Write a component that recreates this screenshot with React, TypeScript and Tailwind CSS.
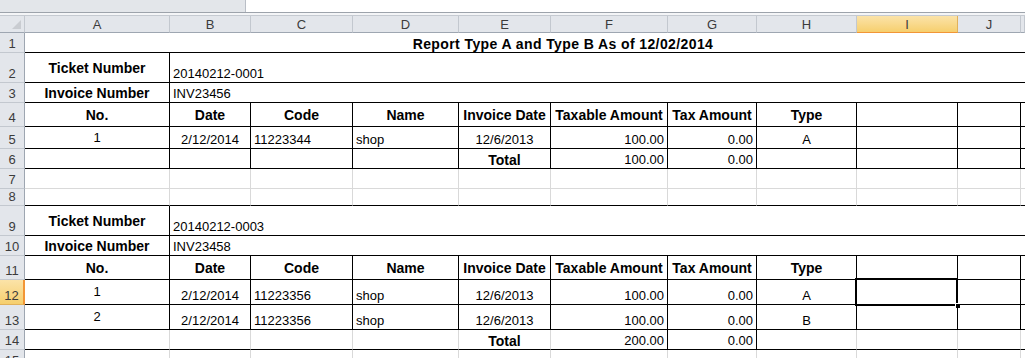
import React from "react";

type Cell = {
  t?: string;
  b?: boolean;
  al?: "l" | "c" | "r";
  v?: "c" | "b";
  r?: "k" | "g" | "n";
  span?: number;
  sel?: boolean;
  title?: boolean;
};

type Row = { h: number; bottom: "k" | "g"; cells: Cell[] };

const hdr = (): Cell[] =>
  ["No.", "Date", "Code", "Name", "Invoice Date", "Taxable Amount", "Tax Amount", "Type", "", "", ""].map((t, i) => ({
    t,
    b: true,
    al: "c" as const,
    v: "c" as const,
    r: i === 10 ? ("n" as const) : ("k" as const),
  }));

const dataRow = (n: string, code: string, type: string, sel = false): Cell[] => [
  { t: n, al: "c", v: "c", r: "k" },
  { t: "2/12/2014", al: "c", r: "k" },
  { t: code, al: "l", r: "k" },
  { t: "shop", al: "l", r: "k" },
  { t: "12/6/2013", al: "c", r: "k" },
  { t: "100.00", al: "r", r: "k" },
  { t: "0.00", al: "r", r: "k" },
  { t: type, al: "c", r: "k" },
  { r: "k", sel },
  { r: "k" },
  { r: "n" },
];

const empty = (r: "k" | "g"): Cell[] => Array.from({ length: 11 }, (_, i) => ({ r: i === 10 ? "n" : r }));

const rows: Row[] = [
  { h: 20, bottom: "k", cells: [{ t: "Report Type A and Type B As of 12/02/2014", b: true, title: true, span: 11, r: "n" }] },
  { h: 30, bottom: "k", cells: [{ t: "Ticket Number", b: true, al: "c", v: "c", r: "k" }, { t: "20140212-0001", al: "l", span: 10, r: "n" }] },
  { h: 20, bottom: "k", cells: [{ t: "Invoice Number", b: true, al: "c", v: "c", r: "k" }, { t: "INV23456", al: "l", span: 10, r: "n" }] },
  { h: 24, bottom: "k", cells: hdr() },
  { h: 22, bottom: "k", cells: dataRow("1", "11223344", "A") },
  {
    h: 20,
    bottom: "k",
    cells: [
      { r: "k" }, { r: "k" }, { r: "k" }, { r: "k" },
      { t: "Total", b: true, al: "c", r: "k" },
      { t: "100.00", al: "r", r: "k" },
      { t: "0.00", al: "r", r: "k" },
      { r: "k" }, { r: "k" }, { r: "k" }, { r: "n" },
    ],
  },
  { h: 20, bottom: "g", cells: empty("g") },
  { h: 17, bottom: "k", cells: empty("g") },
  { h: 30, bottom: "k", cells: [{ t: "Ticket Number", b: true, al: "c", v: "c", r: "k" }, { t: "20140212-0003", al: "l", span: 10, r: "n" }] },
  { h: 20, bottom: "k", cells: [{ t: "Invoice Number", b: true, al: "c", v: "c", r: "k" }, { t: "INV23458", al: "l", span: 10, r: "n" }] },
  { h: 24, bottom: "k", cells: hdr() },
  { h: 25, bottom: "k", cells: dataRow("1", "11223356", "A", true) },
  { h: 25, bottom: "k", cells: dataRow("2", "11223356", "B") },
  {
    h: 20,
    bottom: "k",
    cells: [
      { r: "g" }, { r: "g" }, { r: "g" }, { r: "g" },
      { t: "Total", b: true, al: "c", r: "g" },
      { t: "200.00", al: "r", r: "k" },
      { t: "0.00", al: "r", r: "k" },
      { r: "g" }, { r: "g" }, { r: "g" }, { r: "n" },
    ],
  },
  { h: 20, bottom: "g", cells: empty("g") },
];

const colLetters = ["A", "B", "C", "D", "E", "F", "G", "H", "I", "J", ""];

function CellView({ c, bottom }: { c: Cell; bottom: "k" | "g" }) {
  const rb = c.r === "k" ? "border-r border-r-black" : c.r === "g" ? "border-r border-r-[#d9d9d9]" : "";
  const bb = bottom === "k" ? "border-b border-b-black" : "border-b border-b-[#d9d9d9]";
  const al = c.al === "r" ? "justify-end pr-[3px]" : c.al === "l" ? "justify-start pl-[3px]" : "justify-center";
  const v = c.v === "c" ? "items-center" : "items-end pb-[1px]";
  const font = c.b ? "font-bold text-[14px]" : "text-[13px]";
  const span = c.span === 11 ? "col-span-11" : c.span === 10 ? "col-span-10" : "";
  return (
    <div
      className={`relative flex min-w-0 overflow-visible whitespace-nowrap leading-[14px] text-black ${rb} ${bb} ${al} ${v} ${font} ${span} ${
        c.title ? "pl-[76px] tracking-[0.4px]" : ""
      }`}
    >
      {c.t}
      {c.sel && (
        <div className="absolute left-[-2px] top-[-2px] right-[-1px] bottom-[-2px] border-2 border-black">
          <div className="absolute right-[-5px] bottom-[-5px] h-[6px] w-[6px] bg-black border border-white" />
        </div>
      )}
    </div>
  );
}

export default function App() {
  return (
    <div className="h-[358px] w-[1025px] overflow-hidden bg-white font-['Liberation_Sans',Arial,sans-serif]">
      <div className="flex h-[12px]">
        <div className="h-full w-[246px] border-r border-r-[#b9bec6] bg-[#e3e6ea]" />
        <div className="flex-1 bg-white" />
      </div>
      <div className="h-[4px] border-t border-t-[#9da3ab] border-b border-b-[#c5cad1] bg-[#f4f5f7]" />
      <div
        className="grid grid-cols-[25px_145px_81px_102px_106px_92px_117px_89px_100px_101px_63px_1fr]"
        style={{ gridTemplateRows: `17px ${rows.map((r) => r.h + "px").join(" ")}` }}
      >
        <div className="relative border-r border-r-[#c3c8cf] border-b border-b-[#9ea6b1] bg-[#e3e6eb]">
          <svg className="absolute right-[3px] bottom-[3px]" width="9" height="9" viewBox="0 0 9 9">
            <polygon points="9,0 9,9 0,9" fill="#c9ccd1" />
          </svg>
        </div>
        {colLetters.map((l, i) => (
          <div
            key={i}
            className={`flex items-center justify-center border-r text-[13px] leading-none ${
              l === "I"
                ? "border-r-[#e1b15b] border-b border-b-[#f29536] bg-gradient-to-b from-[#fbe3a8] to-[#f6cf6d] text-[#3b3b3b]"
                : "border-r-[#c3c8cf] border-b border-b-[#9ea6b1] bg-[#e3e6eb] text-[#3b3b3b]"
            }`}
          >
            {l}
          </div>
        ))}
        {rows.map((row, ri) => (
          <React.Fragment key={ri}>
            <div
              className={`flex items-end justify-center pb-[2px] text-[13px] leading-none text-[#3b3b3b] border-b ${
                ri === 11
                  ? "border-r-2 border-r-[#f29536] border-b-[#e1b15b] bg-gradient-to-b from-[#fbe3a8] to-[#f6cf6d]"
                  : "border-r border-r-[#9ea6b1] border-b-[#c3c8cf] bg-[#e3e6eb]"
              }`}
            >
              {ri + 1}
            </div>
            {row.cells.map((c, ci) => (
              <CellView key={ci} c={c} bottom={row.bottom} />
            ))}
          </React.Fragment>
        ))}
      </div>
    </div>
  );
}
